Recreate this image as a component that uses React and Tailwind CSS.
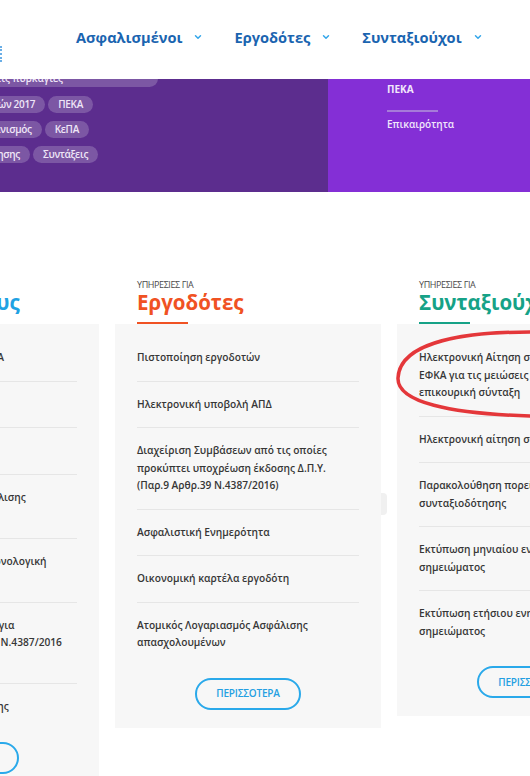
import { ChevronDown } from "lucide-react";

const employers = [
  ["Πιστοποίηση εργοδοτών"],
  ["Ηλεκτρονική υποβολή ΑΠΔ"],
  [
    "Διαχείριση Συμβάσεων από τις οποίες",
    "προκύπτει υποχρέωση έκδοσης Δ.Π.Υ.",
    "(Παρ.9 Αρθρ.39 Ν.4387/2016)",
  ],
  ["Ασφαλιστική Ενημερότητα"],
  ["Οικονομική καρτέλα εργοδότη"],
  ["Ατομικός Λογαριασμός Ασφάλισης", "απασχολουμένων"],
];

const insured = [
  ["Βεβαίωση Απογραφής e-ΕΦΚΑ"],
  ["Ασφαλιστικό Βιογραφικό"],
  ["Ηλεκτρονικές Αιτήσεις"],
  ["Ατομικός Λογαριασμός Ασφάλισης", "μισθωτών"],
  ["Ασφαλιστικό Ιστορικό σε Χρονολογική", "απεικόνιση"],
  ["Βεβαίωση εξόφλησης χρεών για", "της παρ.9 του άρθρου 39 του Ν.4387/2016", "(ΔΠΥ)"],
  ["Παρακολούθηση της e-Αίτησης"],
];

const pensioners = [
  ["Ηλεκτρονική Αίτηση στον e-", "ΕΦΚΑ για τις μειώσεις στην", "επικουρική σύνταξη"],
  ["Ηλεκτρονική αίτηση συνταξιοδότησης"],
  ["Παρακολούθηση πορείας αίτησης", "συνταξιοδότησης"],
  ["Εκτύπωση μηνιαίου ενημερωτικού", "σημειώματος"],
  ["Εκτύπωση ετήσιου ενημερωτικού", "σημειώματος"],
];

function NavItem({ label }) {
  return (
    <div className="flex items-center">
      <span className="text-[14.6px] leading-[20px] font-bold text-[#1a64b0]">{label}</span>
      <ChevronDown className="ml-[11px] w-[10px] h-[10px] text-[#33a6ea]" strokeWidth={3.5} />
    </div>
  );
}

function Pill({ children }) {
  return (
    <div className="h-[17px] px-[10px] rounded-full bg-white/20 text-[10px] leading-[17px] font-semibold text-[#efe6f7] whitespace-nowrap tracking-[-0.3px]">
      {children}
    </div>
  );
}

function PillRow({ width, items }) {
  return (
    <div className={`${width} flex justify-end gap-[3px]`}>
      {items.map((t) => (
        <Pill key={t}>{t}</Pill>
      ))}
    </div>
  );
}

function Column({ title, color, line, items, extra }) {
  return (
    <div className="w-[266px] shrink-0 flex flex-col">
      <div className="px-[22px]">
        <p className="text-[9px] leading-[10px] text-[#4a4a4a] tracking-[-0.4px] uppercase">
          ΥΠΗΡΕΣΙΕΣ ΓΙΑ
        </p>
        <h2 className={`text-[20.5px] leading-[24px] font-bold whitespace-nowrap ${color}`}>{title}</h2>
        <div className={`mt-[8px] w-[51px] h-[2px] ${line}`} />
      </div>
      <div className="relative bg-[#f7f7f7] pt-[11px] pb-[18px] flex flex-col items-center">
        <ul className="w-full px-[22px]">
          {items.map((lines, i) => (
            <li
              key={i}
              className={`py-[14px] ${i < items.length - 1 ? "border-b border-[#e6e6e6]" : ""}`}
            >
              {lines.map((l) => (
                <span
                  key={l}
                  className="block whitespace-nowrap text-[10.2px] leading-[17.5px] font-semibold text-[#363636]"
                >
                  {l}
                </span>
              ))}
            </li>
          ))}
        </ul>
        <button className="mt-[12px] w-[106px] h-[32px] rounded-full border-2 border-[#2aa9ea] text-[10px] font-semibold text-[#249fe2] tracking-[-0.2px]">
          ΠΕΡΙΣΣΟΤΕΡΑ
        </button>
        {extra}
      </div>
    </div>
  );
}

export default function App() {
  return (
    <div className="relative w-[530px] h-[776px] overflow-hidden bg-white font-['Open_Sans',sans-serif]">
      <header className="h-[79px] flex items-start">
        <div className="mt-[46px] w-[2px] h-[16px] border-l-2 border-dotted border-[#6aaee6]" />
        <nav className="ml-[74px] mt-[27px] flex gap-[31px]">
          <NavItem label="Ασφαλισμένοι" />
          <NavItem label="Εργοδότες" />
          <NavItem label="Συνταξιούχοι" />
        </nav>
      </header>

      <section className="h-[113px] flex">
        <div className="w-[328px] bg-[#5c2d8e] flex flex-col">
          <div className="h-[8px] overflow-hidden">
            <div className="w-[158px] flex justify-end -mt-[9px]">
              <div className="h-[17px] pr-[95px] rounded-full bg-white/20 text-[10px] leading-[17px] font-semibold text-[#efe6f7] whitespace-nowrap">
                κατά τις πυρκαγιές
              </div>
            </div>
          </div>
          <div className="mt-[9px] flex flex-col gap-[8px]">
            <PillRow width="w-[93px]" items={["Αποδοχές Μισθωτών 2017", "ΠΕΚΑ"]} />
            <PillRow width="w-[89px]" items={["Οργανισμός", "ΚεΠΑ"]} />
            <PillRow width="w-[98px]" items={["Αίτηση Εξυπηρέτησης", "Συντάξεις"]} />
          </div>
        </div>
        <div className="flex-1 bg-[#842fd6] pl-[59px] pt-[4px]">
          <p className="text-[10px] leading-[12px] font-bold text-[#f1e7fb]">ΠΕΚΑ</p>
          <div className="mt-[15px] w-[51px] h-[2px] bg-[#a67bd9]" />
          <p className="mt-[6px] text-[10px] leading-[12px] font-semibold text-[#f1e7fb]">Επικαιρότητα</p>
        </div>
      </section>

      <main className="pt-[88px] flex items-start gap-[16px] -ml-[167px]">
        <Column
          title="Ασφαλισμένους"
          color="text-[#1fa2e3]"
          line="bg-[#1fa2e3]"
          items={insured}
        />
        <Column
          title="Εργοδότες"
          color="text-[#f05223]"
          line="bg-[#f05223]"
          items={employers}
          extra={
            <div className="absolute -right-[6px] top-[169px] w-[6px] h-[22px] rounded-r-[4px] bg-[#f0f0f0]" />
          }
        />
        <Column
          title="Συνταξιούχους"
          color="text-[#16a287]"
          line="bg-[#16a287]"
          items={pensioners}
        />
      </main>

      <svg
        className="absolute left-0 top-0 pointer-events-none"
        width="530"
        height="776"
        viewBox="0 0 530 776"
      >
        <path
          d="M 532 332 C 470 332, 400 340, 398 378 C 397 402, 450 414, 532 416"
          fill="none"
          stroke="#e4373a"
          strokeWidth="3.5"
          strokeLinecap="round"
        />
      </svg>
    </div>
  );
}
